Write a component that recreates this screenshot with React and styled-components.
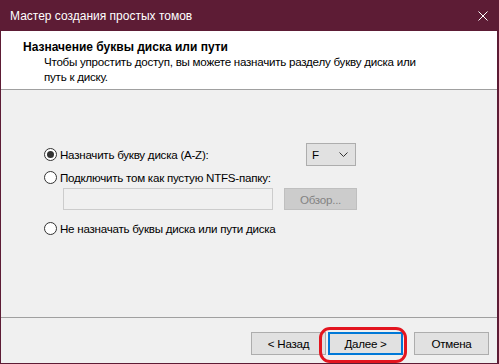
import React, { useState } from 'react'
import styled, { createGlobalStyle } from 'styled-components'

const GlobalStyle = createGlobalStyle`
  html, body {
    margin: 0;
    padding: 0;
    background: #ffffff;
  }
  body {
    font-family: "Liberation Sans", Arial, sans-serif;
  }
`

const Window = styled.div`
  width: 499px;
  height: 364px;
  box-sizing: border-box;
  border: 1px solid #5d1c35;
  border-right-width: 2px;
  display: flex;
  flex-direction: column;
  background: #f0f0f0;
  font-size: 11.6px;
  letter-spacing: -0.25px;
  color: #000;
`

const TitleBar = styled.div`
  height: 30px;
  flex: none;
  background: #5d1c35;
  color: #fff;
  font-size: 12px;
  letter-spacing: 0;
  display: flex;
  align-items: center;
  justify-content: space-between;
  padding: 0 9px 0 9px;
`

const Header = styled.div`
  height: 59px;
  flex: none;
  box-sizing: border-box;
  background: #fff;
  border-bottom: 1px solid #a0a0a0;
  padding: 9px 0 0 22px;
  line-height: 15px;
`

const HeaderTitle = styled.div`
  font-weight: bold;
  font-size: 12px;
  letter-spacing: 0;
`

const HeaderText = styled.div`
  padding-left: 21px;
  line-height: 14.5px;
`

const Body = styled.div`
  flex: 1;
  padding: 53px 0 0 43px;
`

const OptionRow = styled.label`
  display: flex;
  align-items: center;
  justify-content: space-between;
  width: 312px;
  height: ${p => p.$h || 16}px;
  margin-top: ${p => p.$mt || 0}px;
`

const RadioLabel = styled.span`
  display: flex;
  align-items: center;
  gap: 3px;
`

const Radio = styled.span`
  width: 13px;
  height: 13px;
  box-sizing: border-box;
  border: 1px solid #333;
  border-radius: 50%;
  background: #fff;
  display: flex;
  align-items: center;
  justify-content: center;

  &::after {
    content: '';
    width: 7px;
    height: 7px;
    border-radius: 50%;
    background: ${p => (p.$checked ? '#333' : 'transparent')};
  }
`

const Select = styled.div`
  width: 50px;
  height: 23px;
  box-sizing: border-box;
  border: 1px solid #adadad;
  background: #e1e1e1;
  display: flex;
  align-items: center;
  justify-content: space-between;
  padding: 0 7px 0 5px;
`

const PathRow = styled.div`
  display: flex;
  gap: 11px;
  margin: 3px 0 0 19px;
`

const PathInput = styled.div`
  width: 210px;
  height: 22px;
  box-sizing: border-box;
  border: 1px solid #cccccc;
  background: #f0f0f0;
`

const Button = styled.div`
  width: ${p => p.$w || 75}px;
  height: ${p => p.$h || 23}px;
  box-sizing: border-box;
  display: flex;
  align-items: center;
  justify-content: center;
  background: ${p => (p.$disabled ? '#cccccc' : '#e1e1e1')};
  border: ${p => (p.$default ? '2px solid #0078d7' : p.$disabled ? '1px solid #bfbfbf' : '1px solid #adadad')};
  color: ${p => (p.$disabled ? '#838383' : '#000')};
  position: relative;
`

const Footer = styled.div`
  height: 46px;
  flex: none;
  border-top: 1px solid #a0a0a0;
  display: flex;
  justify-content: flex-end;
  align-items: flex-start;
  padding: 14px 8px 0 0;
  box-sizing: border-box;
`

const NavPair = styled.div`
  display: flex;
  gap: 2px;
  margin-right: 11px;
`

const Highlight = styled.span`
  position: absolute;
  left: -11px;
  top: -7px;
  width: 88px;
  height: 36px;
  box-sizing: border-box;
  border: 3px solid #e3151f;
  border-radius: 11px;
  pointer-events: none;
`

const CloseIcon = () => (
  <svg width="10" height="10" viewBox="0 0 10 10">
    <path d="M0.5 0.5 L9.5 9.5 M9.5 0.5 L0.5 9.5" stroke="#fff" strokeWidth="1" />
  </svg>
)

const Chevron = () => (
  <svg width="9" height="5" viewBox="0 0 9 5">
    <path d="M0.5 0.5 L4.5 4.5 L8.5 0.5" stroke="#333" strokeWidth="1" fill="none" />
  </svg>
)

export default function App() {
  const [choice, setChoice] = useState(0)

  return (
    <>
      <GlobalStyle />
      <Window>
        <TitleBar>
          <span>Мастер создания простых томов</span>
          <CloseIcon />
        </TitleBar>
        <Header>
          <HeaderTitle>Назначение буквы диска или пути</HeaderTitle>
          <HeaderText>
            Чтобы упростить доступ, вы можете назначить разделу букву диска или
            <br />
            путь к диску.
          </HeaderText>
        </Header>
        <Body>
          <OptionRow $h={23} onClick={() => setChoice(0)}>
            <RadioLabel>
              <Radio $checked={choice === 0} />
              Назначить букву диска (A-Z):
            </RadioLabel>
            <Select>
              F
              <Chevron />
            </Select>
          </OptionRow>
          <OptionRow $mt={3} onClick={() => setChoice(1)}>
            <RadioLabel>
              <Radio $checked={choice === 1} />
              Подключить том как пустую NTFS-папку:
            </RadioLabel>
          </OptionRow>
          <PathRow>
            <PathInput />
            <Button $w={73} $h={22} $disabled>Обзор...</Button>
          </PathRow>
          <OptionRow $mt={10} onClick={() => setChoice(2)}>
            <RadioLabel>
              <Radio $checked={choice === 2} />
              Не назначать буквы диска или пути диска
            </RadioLabel>
          </OptionRow>
        </Body>
        <Footer>
          <NavPair>
            <Button>&lt; Назад</Button>
            <Button $default>
              Далее &gt;
              <Highlight />
            </Button>
          </NavPair>
          <Button>Отмена</Button>
        </Footer>
      </Window>
    </>
  )
}
